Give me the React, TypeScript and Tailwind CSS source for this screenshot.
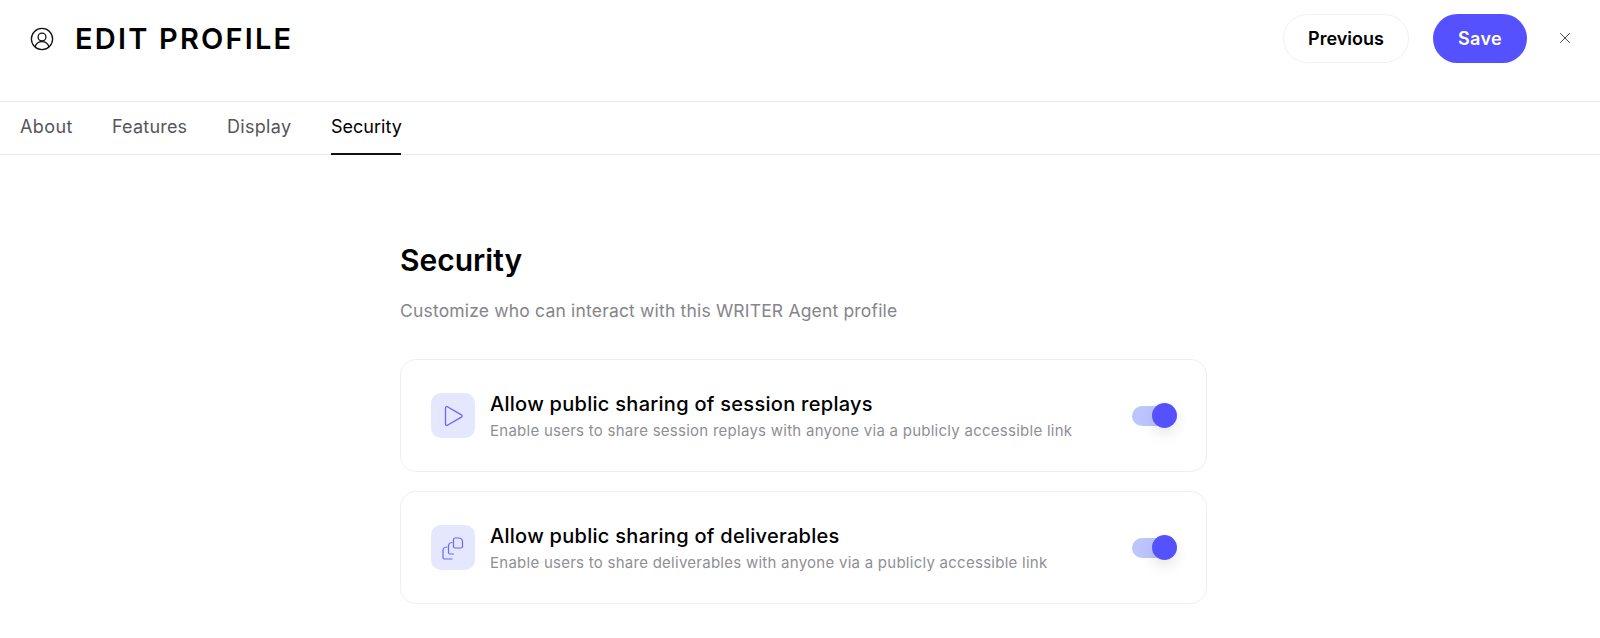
import { X } from "lucide-react";

const font = "font-['Inter','Liberation_Sans',sans-serif]";

function PlayIcon() {
  return (
    <svg width="22" height="22" viewBox="0 0 22 22" fill="none" stroke="#6b66ff" strokeWidth="1.3" strokeLinejoin="round">
      <path d="M3.5 2.8c0-1 1-1.6 1.9-1.1l14 8.2c.9.5.9 1.7 0 2.2l-14 8.2c-.9.5-1.9-.1-1.9-1.1V2.8z" />
    </svg>
  );
}

function CopyIcon() {
  return (
    <svg width="22" height="24" viewBox="0 0 22 24" fill="none" stroke="#6b66ff" strokeWidth="1.2" strokeLinejoin="round" strokeLinecap="round">
      <path d="M11.5 3.5c0-.8.7-1.5 1.5-1.5h3.5c2.4 0 4 1.6 4 4v4.5c0 .8-.7 1.5-1.5 1.5h-6c-.8 0-1.5-.7-1.5-1.5V3.5z" />
      <path d="M10 6.5c-2 .2-3.5 1.4-3.5 3.2v6.8c0 .9.6 1.5 1.5 1.5h3.5" />
      <path d="M5 11c-2.4.2-4 1.4-4 3.2v7.3c0 .9.6 1.5 1.5 1.5H10" />
    </svg>
  );
}

function Toggle() {
  return (
    <div className="relative mr-[5px] h-[20px] w-[45px]">
      <div className="h-[20px] w-[34px] rounded-full bg-[#bcc5fd]" />
      <div className="absolute right-0 top-[-3px] h-[25px] w-[25px] rounded-full bg-[#5551ff] shadow-[0_6px_14px_rgba(0,0,0,0.1)]" />
    </div>
  );
}

function Row({ icon, title, desc }: { icon: React.ReactNode; title: string; desc: string }) {
  return (
    <div className="flex h-[113px] items-center rounded-[16px] border border-[#efeff3] bg-white pl-[30px] pr-[24px]">
      <div className="flex h-[45px] w-[44px] shrink-0 items-center justify-center rounded-[10px] bg-[#e4e7fe]">
        {icon}
      </div>
      <div className="ml-[15px] flex-1 pt-[2px]">
        <div className="text-[20px] leading-[26px] font-medium tracking-[0.28px] text-black">{title}</div>
        <div className="mt-[3px] text-[15px] leading-[22px] tracking-[0.26px] text-[#8f8f94]">{desc}</div>
      </div>
      <Toggle />
    </div>
  );
}

export default function App() {
  return (
    <div className={`${font} h-[638px] w-[1600px] overflow-hidden bg-white`}>
      {/* Header */}
      <div className="flex h-[102px] items-start justify-between border-b border-[#e9e9ec] pl-[30px] pr-[26px] pt-[14px]">
        <div className="flex h-[49px] items-center">
          <svg width="24" height="24" viewBox="0 0 24 24" fill="none" stroke="#111" strokeWidth="1.3">
            <circle cx="12" cy="12" r="10.6" />
            <circle cx="12" cy="10" r="3.9" />
            <path d="M5 20c1-3.4 3.7-5.4 7-5.4s6 2 7 5.4" />
          </svg>
          <div className="ml-[21px] text-[29px] leading-[45px] font-semibold tracking-[2.2px] text-black">EDIT PROFILE</div>
        </div>
        <div className="flex items-center">
          <button className="h-[49px] w-[126px] rounded-full border border-[#f0f0f2] bg-white text-[18px] font-semibold text-black">
            Previous
          </button>
          <button className="ml-[24px] h-[49px] w-[94px] rounded-full bg-[#5551ff] text-[18px] font-semibold tracking-[0.4px] text-white">
            Save
          </button>
          <X className="ml-[29px] -translate-y-[1px]" size={18} strokeWidth={1.2} color="#333" />
        </div>
      </div>

      {/* Tabs */}
      <div className="flex h-[53px] gap-[40px] border-b border-[#e9e9ec] pl-[20px] text-[18px] text-[#55555a]">
        <div className="w-[52px] pt-[11px] tracking-[0.4px] whitespace-nowrap">About</div>
        <div className="w-[75px] pt-[11px] tracking-[0.2px] whitespace-nowrap">Features</div>
        <div className="w-[64px] pt-[11px] tracking-[0.3px] whitespace-nowrap">Display</div>
        <div className="h-[53px] w-[70px] border-b-2 border-[#111] pt-[11px] whitespace-nowrap text-black">Security</div>
      </div>

      {/* Body */}
      <div className="ml-[400px] w-[807px] pt-[82px]">
        <h1 className="text-[30px] leading-[46px] font-semibold text-black">Security</h1>
        <p className="mt-[15px] text-[17.5px] leading-[26px] tracking-[0.18px] text-[#85858a]">
          Customize who can interact with this WRITER Agent profile
        </p>
        <div className="mt-[35px] flex flex-col gap-[19px]">
          <Row
            icon={<PlayIcon />}
            title="Allow public sharing of session replays"
            desc="Enable users to share session replays with anyone via a publicly accessible link"
          />
          <Row
            icon={<CopyIcon />}
            title="Allow public sharing of deliverables"
            desc="Enable users to share deliverables with anyone via a publicly accessible link"
          />
        </div>
      </div>
    </div>
  );
}
